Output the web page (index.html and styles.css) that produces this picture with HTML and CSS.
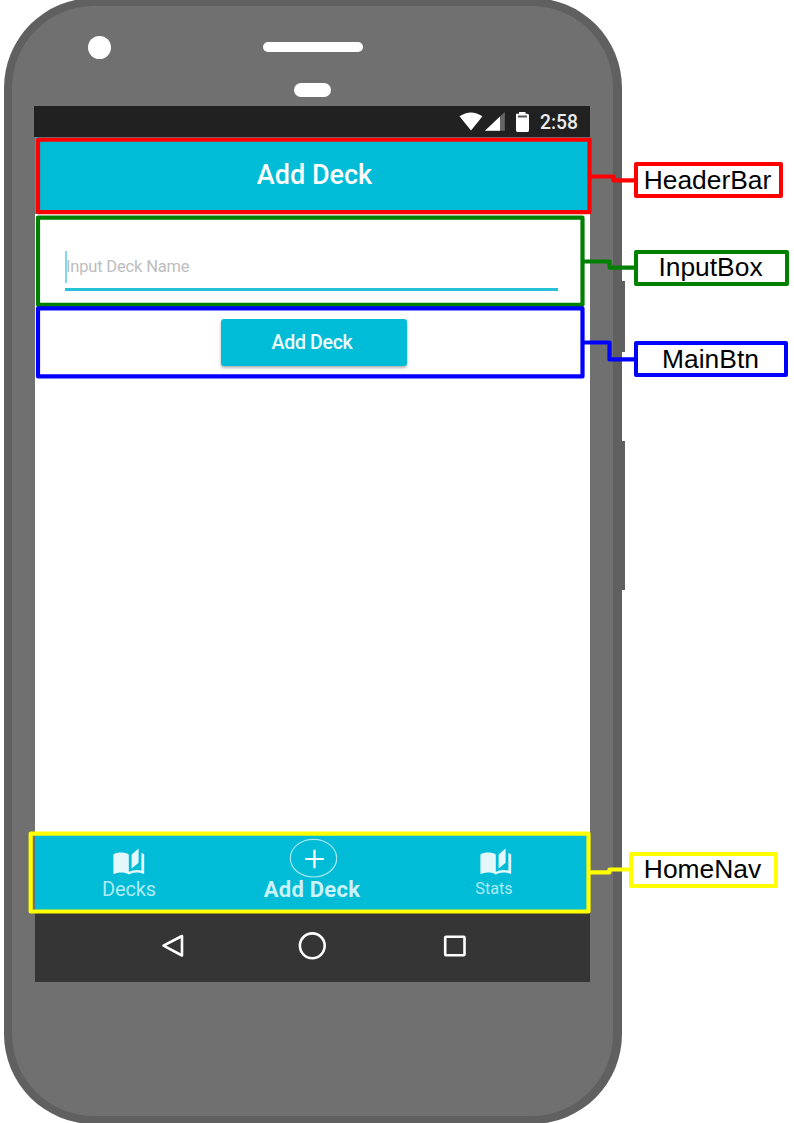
FILE: index.html
```html
<!DOCTYPE html>
<html lang="en">
<head>
<meta charset="utf-8">
<title>Add Deck components</title>
<link rel="stylesheet" href="styles.css">
</head>
<body>
<main class="diagram">
  <div class="phone">
    <div class="phone-top">
      <span class="camera"></span>
      <span class="speaker"></span>
      <span class="sensor"></span>
    </div>
    <div class="status-bar">
      <svg class="status-icons" width="74" height="24" viewBox="0 0 74 24">
        <path d="M1.500 6.300Q12.800 -1.300 24.500 6.300L13 20.500Z" fill="#fff"/>
        <path d="M27 20.800L46.800 2V20.800Z" fill="#666"/>
        <path d="M27 20.800L42 6.500V20.800Z" fill="#fff"/>
        <path d="M58 3.800H61V2H67.500V3.800H69.500Q71 3.800 71 5.300V20.300Q71 22 69.500 22H59.500Q58 22 58 20.300V5.300Q58 3.800 58 3.800Z" fill="#fff"/>
        <path d="M60 5.500H69V7.500H60Z" fill="#555"/>
      </svg>
      <span class="time">2:58</span>
    </div>
    <div class="screen">
      <header class="header-bar">Add Deck</header>
      <section class="input-box">
        <div class="field"><span class="placeholder">Input Deck Name</span></div>
      </section>
      <section class="main-btn"><button class="btn" type="button"><span>Add Deck</span></button></section>
      <nav class="home-nav">
        <div class="tab tab-decks">
          <svg class="book" viewBox="0 0 24 24" preserveAspectRatio="none"><path d="M19 2L14 6.500V17.500L19 13V2M6.500 5C4.550 5 2.450 5.400 1 6.500V21.160C1 21.410 1.250 21.660 1.500 21.660C1.600 21.660 1.650 21.590 1.750 21.590C3.100 20.940 5.050 20.500 6.500 20.500C8.450 20.500 10.550 20.900 12 22C13.350 21.150 15.800 20.500 17.500 20.500C19.150 20.500 20.850 20.810 22.250 21.560C22.350 21.610 22.400 21.590 22.500 21.590C22.750 21.590 23 21.340 23 21.090V6.500C22.400 6.050 21.750 5.750 21 5.500V19C19.900 18.650 18.700 18.500 17.500 18.500C15.800 18.500 13.350 19.150 12 20V6.500C10.550 5.400 8.450 5 6.500 5Z"/></svg>
          <span class="tab-label">Decks</span>
        </div>
        <div class="tab tab-add">
          <svg class="plus" width="50" height="41" viewBox="0 0 50 41"><ellipse cx="26.500" cy="21.200" rx="23.200" ry="18.800" fill="none" stroke="#a9e8f1" stroke-width="1.200"/><path d="M18 22H37M27.500 12.800V31.300" fill="none" stroke="#fff" stroke-width="2.200"/></svg>
          <span class="tab-label">Add Deck</span>
        </div>
        <div class="tab tab-stats">
          <svg class="book" viewBox="0 0 24 24" preserveAspectRatio="none"><path d="M19 2L14 6.500V17.500L19 13V2M6.500 5C4.550 5 2.450 5.400 1 6.500V21.160C1 21.410 1.250 21.660 1.500 21.660C1.600 21.660 1.650 21.590 1.750 21.590C3.100 20.940 5.050 20.500 6.500 20.500C8.450 20.500 10.550 20.900 12 22C13.350 21.150 15.800 20.500 17.500 20.500C19.150 20.500 20.850 20.810 22.250 21.560C22.350 21.610 22.400 21.590 22.500 21.590C22.750 21.590 23 21.340 23 21.090V6.500C22.400 6.050 21.750 5.750 21 5.500V19C19.900 18.650 18.700 18.500 17.500 18.500C15.800 18.500 13.350 19.150 12 20V6.500C10.550 5.400 8.450 5 6.500 5Z"/></svg>
          <span class="tab-label">Stats</span>
        </div>
      </nav>
      <div class="system-nav">
        <svg width="555" height="70" viewBox="35 912 555 70" fill="none" stroke="#fff" stroke-width="2.600" stroke-linejoin="round">
          <path d="M163.500 945.700L182 936V955.500Z"/>
          <circle cx="312.300" cy="945.800" r="12.400"/>
          <rect x="445.200" y="936.700" width="19.300" height="18.600" rx="0.800"/>
        </svg>
      </div>
    </div>
  </div>
  <span class="side-button power"></span>
  <span class="side-button volume"></span>

  <svg class="frames" width="794" height="1123" viewBox="0 0 794 1123">
    <g class="red"><path d="M38 139.700H589.500V212.200H38Z"/><path d="M589.500 176.500H613.500V180.400H636.500"/></g>
    <g class="green"><path d="M38 217.700H582.500V304.800H38Z"/><path d="M582.500 261.500H609.500V267.600H636.500"/></g>
    <g class="blue"><path d="M38 308.400H582.500V376.400H38Z"/><path d="M582.500 342.500H609.500V359.400H636.500"/></g>
    <g class="yellow"><path d="M30.700 833.600H588.500V911.500H30.700Z"/><path d="M588.500 872.300H609.500V869.500H631.500"/></g>
  </svg>
  <div class="label label-header">HeaderBar</div>
  <div class="label label-input">InputBox</div>
  <div class="label label-button">MainBtn</div>
  <div class="label label-nav">HomeNav</div>
</main>
</body>
</html>
```

FILE: styles.css
```css
* { box-sizing: border-box; }
body { margin: 0; background: #fff; font-family: Roboto, "Liberation Sans", sans-serif; }
.diagram { position: relative; width: 794px; height: 1123px; overflow: hidden; }

.phone {
  width: 618px;
  height: 1126px;
  margin: -2px 0 0 4px;
  border: 8px solid #606060;
  border-right-width: 9px;
  border-radius: 90px;
  background: #707070;
}
.phone-top { position: relative; height: 100px; }
.camera, .speaker, .sensor { position: absolute; background: #fff; }
.camera { left: 76px; top: 30px; width: 23px; height: 23px; border-radius: 50%; }
.speaker { left: 251px; top: 36px; width: 100px; height: 10px; border-radius: 5px; }
.sensor { left: 282px; top: 77px; width: 37px; height: 14px; border-radius: 7px; }

.status-bar {
  display: flex;
  align-items: center;
  justify-content: flex-end;
  gap: 8px;
  width: 556px;
  height: 31px;
  margin-left: 22px;
  padding-right: 12px;
  background: #212121;
  color: #ececec;
  font-size: 19.300px;
  font-weight: 500;
}
.time { padding-top: 1px; }

.screen {
  display: flex;
  flex-direction: column;
  width: 555px;
  height: 845px;
  margin-left: 23px;
  background: #fff;
}
.header-bar {
  display: flex;
  align-items: center;
  justify-content: center;
  height: 77px;
  padding: 0 0 2px 4px;
  background: #00bcd7;
  color: #fff;
  font-size: 27px;
  font-weight: 500;
}
.input-box { height: 93px; padding: 37px 32px 0 30px; }
.field { height: 40px; border-bottom: 3px solid #26c0d9; }
.placeholder {
  display: block;
  width: 150px;
  height: 32px;
  border-left: 2px solid #7fdbe8;
  color: #bdbdbd;
  font-size: 16.500px;
  letter-spacing: -0.180px;
  text-indent: -1px;
  line-height: 31px;
}
.main-btn { display: flex; justify-content: center; height: 70px; padding: 12px 0 11px 3px; }
.btn {
  width: 186px;
  height: 47px;
  padding: 1px 4px 0 0;
  border: 0;
  border-radius: 3px;
  background: #00bcd7;
  box-shadow: 0 2px 3px rgba(0, 0, 0, .3);
  color: #f0fcfe;
  font: 500 19.500px/46px Roboto, sans-serif;
  letter-spacing: -0.300px;
}
.home-nav { display: flex; height: 79px; margin-top: auto; background: #00bcd7; }
.tab { display: flex; flex: 1 1 0; flex-direction: column; align-items: center; color: #b0eaf3; }
.book { width: 33.600px; height: 31px; margin-top: 13px; fill: #e4f8fb; }
.plus { margin-top: 4px; }
.tab-label { line-height: 24px; white-space: nowrap; }
.tab-decks { padding-left: 3px; font-size: 20px; letter-spacing: -0.150px; }
.tab-add { padding-left: 1px; color: #cbf2f7; font-size: 22px; font-weight: 700; letter-spacing: 0.250px; }
.tab-stats .book { margin-left: 4px; }
.tab-stats { padding-right: 5px; font-size: 16.200px; }
.system-nav { height: 70px; background: #353535; }
.system-nav svg { display: block; }

.side-button { position: absolute; left: 622px; width: 3px; background: #606060; }
.power { top: 281px; height: 71px; }
.volume { top: 441px; height: 149px; }

.frames { position: absolute; left: 0; top: 0; fill: none; stroke-width: 4.200; stroke-linejoin: round; }
.red { stroke: #f00; }
.green { stroke: #008000; }
.blue { stroke: #00f; }
.yellow { stroke: #ff0; }

.label {
  position: absolute;
  display: flex;
  align-items: center;
  justify-content: center;
  height: 36px;
  padding-bottom: 2px;
  border: 4px solid;
  border-radius: 2px;
  background: #fff;
  color: #000;
  font: 26.400px/26px "Liberation Sans", Arial, sans-serif;
}
.label-header { left: 634px; top: 162px; width: 149px; padding: 0 2px 0 0; border-color: #f00; }
.label-input { left: 634px; top: 250px; width: 155px; padding-right: 2px; border-color: #008000; }
.label-button { left: 634px; top: 341px; width: 154px; padding: 0 1px 1px 0; border-color: #00f; }
.label-nav { left: 629px; top: 852px; width: 149px; padding-right: 2px; border-color: #ff0; }
```
